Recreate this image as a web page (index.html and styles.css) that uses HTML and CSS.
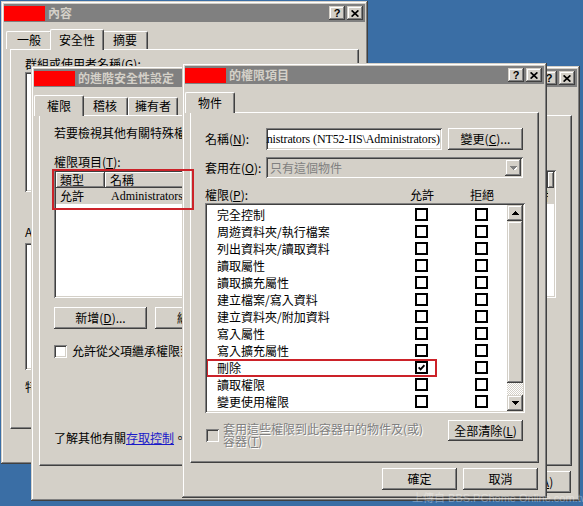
FILE: index.html
```html
<!DOCTYPE html>
<html lang="zh-Hant">
<head>
<meta charset="utf-8">
<title>權限項目</title>
<link rel="stylesheet" href="styles.css">
</head>
<body>
<div class="desktop">

  <!-- Window 1: properties -->
  <div class="win w1">
    <div class="titlebar">
      <span class="redact"></span><span class="ttext">內容</span>
      <span class="tbtns">
        <span class="tbtn"><span class="qmark">?</span></span>
        <span class="tbtn"><svg width="8" height="7" viewBox="0 0 8 7"><path d="M0.6 0.4L7.4 6.6M7.4 0.4L0.6 6.6" stroke="#000" stroke-width="1.7"/></svg></span>
      </span>
    </div>
    <div class="tabs tabs1">
      <span class="tab">一般</span><span class="tab sel">安全性</span><span class="tab">摘要</span>
    </div>
    <div class="panel p1">
      <div class="lbl">群組或使用者名稱(<u>G</u>):</div>
      <div class="listbox lb1"></div>
      <div class="lbl lbl2">Administrators 的權限(<u>P</u>):</div>
      <div class="listbox lb2"></div>
      <div class="lbl lbl3">特殊權限或進階設定，請按一下 [進階]。</div>
    </div>
    <div class="btnrow">
      <span class="btn">確定</span><span class="btn">取消</span><span class="btn">套用(<u>A</u>)</span>
    </div>
  </div>

  <!-- Window 2: advanced security settings -->
  <div class="win w2">
    <div class="titlebar">
      <span class="redact"></span><span class="ttext">的進階安全性設定</span>
      <span class="tbtns">
        <span class="tbtn"><span class="qmark">?</span></span>
        <span class="tbtn"><svg width="8" height="7" viewBox="0 0 8 7"><path d="M0.6 0.4L7.4 6.6M7.4 0.4L0.6 6.6" stroke="#000" stroke-width="1.7"/></svg></span>
      </span>
    </div>
    <div class="tabs">
      <span class="tab sel">權限</span><span class="tab">稽核</span><span class="tab">擁有者</span>
    </div>
    <div class="panel p2">
      <div class="lbl">若要檢視其他有關特殊權限的詳細資訊，請選取一個權限項目，然後按一下 [編輯]。</div>
      <div class="lbl lvlabel">權限項目(<u>T</u>):</div>
      <div class="listview">
        <div class="lvhead">
          <span class="hc c1">類型</span><span class="hc c2">名稱</span><span class="hc c3">權限</span><span class="hc c4">繼承自</span><span class="hc c5">套用到</span><span class="hc c6"></span>
        </div>
        <div class="lvrow">
          <span class="c1">允許</span><span class="c2 serif">Administrators</span><span class="c3">特殊</span><span class="c4">&lt;未繼承&gt;</span><span class="c5">只有這個物件</span>
        </div>
      </div>
      <div class="btns2">
        <span class="btn wide">新增(<u>D</u>)...</span><span class="btn wide">編輯(<u>E</u>)...</span><span class="btn wide">移除(<u>R</u>)</span>
      </div>
      <div class="chkrow">
        <span class="chk3d"></span>
        <span>允許從父項繼承權限到此物件及所有子物件。包括明確定義的項目(<u>I</u>)。</span>
      </div>
      <div class="learn">了解其他有關<span class="link">存取控制</span>。</div>
    </div>
    <div class="btnrow">
      <span class="btn">確定</span><span class="btn">取消</span><span class="btn">套用(<u>A</u>)</span>
    </div>
  </div>

  <!-- Window 3: permission entry -->
  <div class="win w3">
    <div class="titlebar">
      <span class="redact"></span><span class="ttext">的權限項目</span>
      <span class="tbtns">
        <span class="tbtn"><span class="qmark">?</span></span>
        <span class="tbtn"><svg width="8" height="7" viewBox="0 0 8 7"><path d="M0.6 0.4L7.4 6.6M7.4 0.4L0.6 6.6" stroke="#000" stroke-width="1.7"/></svg></span>
      </span>
    </div>
    <div class="tabs">
      <span class="tab sel">物件</span>
    </div>
    <div class="panel p3">
      <div class="frow">
        <span class="flabel">名稱(<u>N</u>):</span>
        <span class="textbox"><span class="serif tbtext">Administrators (NT52-IIS\Administrators)</span></span>
        <span class="btn">變更(<u>C</u>)...</span>
      </div>
      <div class="frow frow2">
        <span class="flabel">套用在(<u>O</u>):</span>
        <span class="combo">
          <span class="ctext">只有這個物件</span>
          <span class="dd"><svg width="7" height="4" viewBox="0 0 7 4"><path d="M1 1h7v1h-1v1h-1v1h-1v1h-1v-1h-1v-1h-1v-1h-1z" fill="#fff"/><path d="M0 0h7v1h-1v1h-1v1h-1v1h-1v-1h-1v-1h-1v-1h-1z" fill="#808080"/></svg></span>
        </span>
      </div>
      <div class="permhead">
        <span class="phlabel">權限(<u>P</u>):</span>
        <span class="phcol">允許</span>
        <span class="phcol phdeny">拒絕</span>
      </div>
      <div class="plist">
        <div class="items">
          <div class="item"><span class="iname">完全控制</span><span class="cb"></span><span class="cb"></span></div>
          <div class="item"><span class="iname">周遊資料夾/執行檔案</span><span class="cb"></span><span class="cb"></span></div>
          <div class="item"><span class="iname">列出資料夾/讀取資料</span><span class="cb"></span><span class="cb"></span></div>
          <div class="item"><span class="iname">讀取屬性</span><span class="cb"></span><span class="cb"></span></div>
          <div class="item"><span class="iname">讀取擴充屬性</span><span class="cb"></span><span class="cb"></span></div>
          <div class="item"><span class="iname">建立檔案/寫入資料</span><span class="cb"></span><span class="cb"></span></div>
          <div class="item"><span class="iname">建立資料夾/附加資料</span><span class="cb"></span><span class="cb"></span></div>
          <div class="item"><span class="iname">寫入屬性</span><span class="cb"></span><span class="cb"></span></div>
          <div class="item"><span class="iname">寫入擴充屬性</span><span class="cb"></span><span class="cb"></span></div>
          <div class="item">
            <span class="iname">刪除</span>
            <span class="cb"><svg width="7" height="7" viewBox="0 0 7 7"><path d="M0.6 3.4L2.6 5.4L6.4 1.2" fill="none" stroke="#000" stroke-width="1.8"/></svg></span>
            <span class="cb"></span>
            <span class="mark"></span>
          </div>
          <div class="item"><span class="iname">讀取權限</span><span class="cb"></span><span class="cb"></span></div>
          <div class="item"><span class="iname">變更使用權限</span><span class="cb"></span><span class="cb"></span></div>
        </div>
        <div class="vscroll">
          <span class="sbtn"><svg width="7" height="4" viewBox="0 0 7 4"><path d="M3 0h1v1h1v1h1v1h1v1H0V3h1V2h1V1h1z" fill="#000"/></svg></span>
          <span class="thumb"></span>
          <span class="track"></span>
          <span class="sbtn"><svg width="7" height="4" viewBox="0 0 7 4"><path d="M0 0h7v1H6v1H5v1H4v1H3V3H2V2H1V1H0z" fill="#000"/></svg></span>
        </div>
      </div>
      <div class="brow">
        <div class="dchk">
          <span class="chk3d off"></span>
          <span class="dtext">套用這些權限到此容器中的物件及(或)<br>容器(<u>T</u>)</span>
        </div>
        <span class="btn btn21">全部清除(<u>L</u>)</span>
      </div>
    </div>
    <div class="btnrow">
      <span class="btn">確定</span><span class="btn">取消</span>
    </div>
  </div>

  <div class="annot"></div>
  <div class="watermark">上傳自 BBS.PChome Online.com.tw</div>
</div>
</body>
</html>
```

FILE: styles.css
```css
* { box-sizing: border-box; }
html, body { margin: 0; padding: 0; }
body {
  width: 583px; height: 506px; overflow: hidden;
  background: #3a6ea5;
  font-family: "Noto Sans CJK TC", "Noto Sans", sans-serif;
  font-size: 12px; line-height: 14px; color: #000;
}
u { text-decoration: underline; text-underline-offset: 1px; }
.serif { font-family: "Liberation Serif", "Noto Sans CJK TC", serif; }

.desktop { position: relative; width: 583px; height: 506px; }

/* windows */
.win {
  position: absolute;
  display: flex; flex-direction: column;
  padding: 3px;
  background: #d4d0c8;
  box-shadow: inset -1px -1px #404040, inset 1px 1px #d4d0c8, inset -2px -2px #808080, inset 2px 2px #fff;
}
.w1 { left: 1px; top: 1px; width: 367px; height: 463px; z-index: 1; }
.w2 { left: 31px; top: 66px; width: 549px; height: 435px; z-index: 2; }
.w3 { left: 182px; top: 63px; width: 365px; height: 435px; z-index: 3; }

.titlebar {
  flex: none; height: 18px; background: #808080;
  display: flex; align-items: center; padding-right: 2px;
}
.redact { flex: none; width: 41px; height: 15px; background: #ff0000; }
.ttext { margin-left: 3px; color: #d4d0c8; font-weight: bold; line-height: 14px; white-space: nowrap; }
.tbtns { margin-left: auto; display: flex; gap: 2px; }
.tbtn {
  width: 16px; height: 14px; background: #d4d0c8;
  display: flex; align-items: center; justify-content: center;
  box-shadow: inset -1px -1px #404040, inset 1px 1px #d4d0c8, inset -2px -2px #808080, inset 2px 2px #fff;
}
.qmark { font-family: "Liberation Sans", sans-serif; font-weight: bold; font-size: 11px; line-height: 11px; }

/* tabs */
.tabs {
  flex: none; display: flex; align-items: flex-end;
  height: 20px; margin-top: 8px; padding-left: 2px;
  position: relative; z-index: 1;
}
.tabs1 { margin-top: 7px; }
.tab {
  height: 18px; min-width: 46px; padding: 0 6px;
  text-align: center; line-height: 16px; white-space: nowrap;
  background: #d4d0c8;
  border: 1px solid #fff; border-bottom: none; border-right-color: #404040;
  border-radius: 2px 2px 0 0;
  box-shadow: inset -1px 0 #808080;
}
.tab.sel {
  height: 21px; min-width: 50px; margin: 0 -2px -1px; padding: 0 8px;
  line-height: 19px; position: relative; z-index: 2;
}

/* panels */
.panel {
  flex: 1; min-height: 0;
  display: flex; flex-direction: column;
  border: 1px solid #fff; border-right-color: #404040; border-bottom-color: #404040;
  box-shadow: inset -1px -1px #808080;
}
.w1 .panel { margin: 0 6px; }
.w2 .panel, .w3 .panel { margin: 0 5px; }

.btnrow { flex: none; display: flex; justify-content: flex-end; gap: 6px; margin: 5px 6px 5px 0; }
.btn {
  flex: none; width: 75px; height: 22px; background: #d4d0c8;
  display: flex; align-items: center; justify-content: center; white-space: nowrap;
  box-shadow: inset -1px -1px #404040, inset 1px 1px #fff, inset -2px -2px #808080;
}
.btn.wide { width: 93px; }
.btn21 { height: 21px; }

.listbox, .textbox, .combo, .plist, .listview, .chk3d {
  box-shadow: inset 1px 1px #808080, inset -1px -1px #fff, inset 2px 2px #404040, inset -2px -2px #d4d0c8;
}

/* window 1 panel */
.p1 { padding: 8px 14px 0 14px; }
.p1 .lbl { line-height: 12px; white-space: nowrap; }
.listbox { background: #fff; width: 100%; }
.lb1 { margin-top: 2px; height: 120px; }
.lbl2 { margin-top: 34px; }
.lb2 { margin-top: 5px; height: 127px; }
.lbl3 { margin-top: 11px; }

/* window 2 panel */
.p2 { padding: 10px 15px 20px 14px; }
.p2 .lbl { white-space: nowrap; }
.lvlabel { margin-top: 15px; }
.listview { margin-top: 1px; height: 128px; background: #fff; padding: 2px; }
.lvhead { display: flex; height: 16px; }
.hc {
  flex: none; height: 16px; line-height: 15px; padding-left: 5px; background: #d4d0c8;
  box-shadow: inset -1px -1px #404040, inset 1px 1px #fff, inset -2px -2px #808080;
}
.lvrow { display: flex; height: 16px; line-height: 16px; background: #d4d0c8; white-space: nowrap; }
.lvrow span { flex: none; padding-left: 6px; overflow: hidden; }
.c1 { width: 49px; }
.hc.c1 { padding-left: 4px; }
.lvrow .c1 { padding-left: 4px; }
.c2 { width: 150px; }
.c3 { width: 110px; }
.c4 { width: 110px; }
.c5 { width: 73px; }
.c6 { flex: 1 !important; }
.btns2 { display: flex; gap: 8px; margin-top: 9px; }
.chkrow { display: flex; align-items: center; gap: 5px; margin-top: 15px; white-space: nowrap; }
.chk3d { flex: none; width: 13px; height: 13px; background: #fff; }
.chk3d.off { background: #d4d0c8; }
.learn { margin-top: auto; white-space: nowrap; }
.link { color: #1a1ac8; text-decoration: underline; }

/* window 3 panel */
.p3 { padding: 14px 15px 0 14px; }
.frow { display: flex; align-items: center; height: 23px; }
.frow2 { margin-top: 7px; height: 21px; }
.flabel { flex: none; width: 61px; white-space: nowrap; }
.textbox {
  flex: none; width: 176px; height: 22px; background: #fff;
  display: flex; align-items: center; justify-content: flex-end;
  overflow: hidden; padding: 0 2px; white-space: nowrap;
}
.tbtext { letter-spacing: -0.12px; }
.frow .btn { margin-left: 6px; }
.combo {
  flex: none; width: 257px; height: 21px; background: #d4d0c8;
  display: flex; align-items: center; padding: 2px;
}
.ctext { flex: 1; color: #808080; padding-left: 2px; }
.dd {
  flex: none; width: 16px; height: 17px; background: #d4d0c8;
  display: flex; align-items: center; justify-content: center;
  box-shadow: inset -1px -1px #404040, inset 1px 1px #d4d0c8, inset -2px -2px #808080, inset 2px 2px #fff;
}
.permhead { display: flex; margin-top: 10px; height: 14px; white-space: nowrap; }
.phlabel { width: 205px; flex: none; }
.phcol { width: 24px; flex: none; }
.phdeny { margin-left: 36px; }

.plist { display: flex; margin-top: 1px; width: 320px; height: 210px; padding: 2px; background: #fff; }
.items { flex: 1; padding-top: 1px; overflow: hidden; }
.item { position: relative; display: flex; align-items: center; height: 17px; padding-left: 10px; white-space: nowrap; }
.iname { flex: none; width: 198px; }
.cb {
  flex: none; width: 13px; height: 13px; background: #fff;
  border: 2px solid #000;
  display: flex; align-items: center; justify-content: center;
}
.cb + .cb { margin-left: 47px; }
.mark { position: absolute; left: -1px; top: 0; width: 231px; height: 18px; border: 2px solid #cc2229; }

.vscroll { flex: none; width: 16px; display: flex; flex-direction: column; }
.sbtn, .thumb {
  flex: none; background: #d4d0c8;
  box-shadow: inset -1px -1px #404040, inset 1px 1px #d4d0c8, inset -2px -2px #808080, inset 2px 2px #fff;
}
.sbtn { height: 16px; display: flex; align-items: center; justify-content: center; }
.thumb { height: 162px; }
.track { flex: 1; background: repeating-conic-gradient(#fff 0 25%, #d4d0c8 0 50%) 0 0 / 2px 2px; }

.brow { display: flex; justify-content: space-between; align-items: flex-start; margin-top: 7px; }
.dchk { display: flex; align-items: center; gap: 4px; margin-top: 3px; margin-left: 1px; }
.dtext { line-height: 12px; color: #808080; text-shadow: 1px 1px #fff; white-space: nowrap; }

/* overlays */
.annot { position: absolute; left: 52px; top: 169px; width: 142px; height: 41px; border: 2px solid #cc2229; z-index: 5; }
.watermark {
  position: absolute; left: 412px; top: 492px; z-index: 6;
  font-family: "Liberation Sans", "Noto Sans CJK TC", sans-serif; font-size: 11px; line-height: 12px;
  color: rgba(255, 255, 255, 0.35); white-space: nowrap;
}
```
